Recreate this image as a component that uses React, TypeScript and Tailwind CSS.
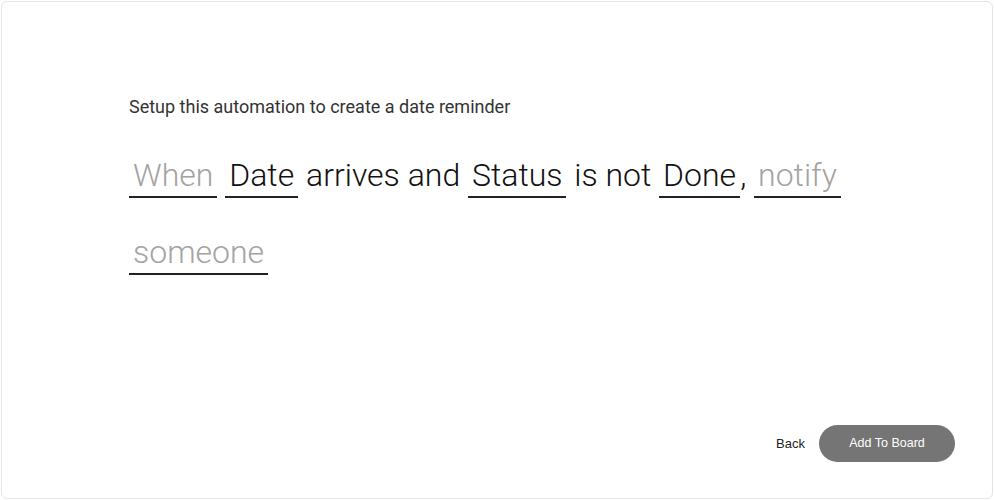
export default function App() {
  return (
    <div className="h-[500px] w-[994px] bg-white p-px">
      <div className="flex h-full flex-col rounded-md border border-[#e4e4e4] bg-white">
        <div className="flex-1 pl-[127px] pr-10 pt-[93px]">
          <p className="font-['Roboto',sans-serif] text-[18px] leading-6 text-[#333]">
            Setup this automation to create a date reminder
          </p>
          <p className="mt-[18px] font-['Roboto',sans-serif] text-[32px] font-light leading-[77px] text-[#111]">
            <span className="inline-block border-b-2 border-[#222] px-1 leading-[42px] text-[#a3a3a3]">When</span>{' '}
            <span className="inline-block border-b-2 border-[#222] px-1 leading-[42px]">Date</span> arrives and{' '}
            <span className="inline-block border-b-2 border-[#222] px-1 leading-[42px]">Status</span> is not{' '}
            <span className="inline-block border-b-2 border-[#222] px-1 leading-[42px]">Done</span>,{' '}
            <span className="inline-block border-b-2 border-[#222] px-1 leading-[42px] text-[#a3a3a3]">notify</span>{' '}
            <span className="inline-block border-b-2 border-[#222] px-1 leading-[42px] text-[#a3a3a3]">someone</span>
          </p>
        </div>
        <div className="flex items-center justify-end gap-[14px] pb-9 pr-[37px] font-['Liberation_Sans',sans-serif]">
          <button className="text-[13px] text-[#222]">Back</button>
          <button className="h-[37px] w-[136px] rounded-full bg-[#757575] text-[12.5px] text-white">Add To Board</button>
        </div>
      </div>
    </div>
  )
}
